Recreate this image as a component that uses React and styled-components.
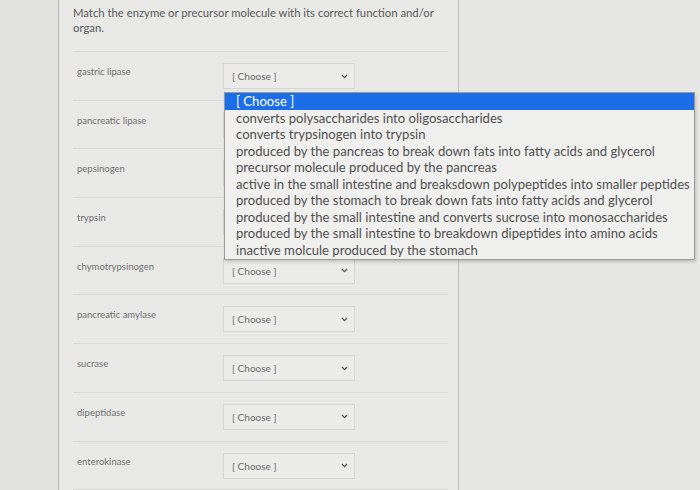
import styled, { createGlobalStyle } from 'styled-components'

const GlobalStyle = createGlobalStyle`
  html, body {
    margin: 0;
    padding: 0;
    background: #e5e5e3;
    font-family: Lato, "Open Sans", sans-serif;
  }
`

const enzymes = [
  'gastric lipase',
  'pancreatic lipase',
  'pepsinogen',
  'trypsin',
  'chymotrypsinogen',
  'pancreatic amylase',
  'sucrase',
  'dipeptidase',
  'enterokinase',
]

const options = [
  '[ Choose ]',
  'converts polysaccharides into oligosaccharides',
  'converts trypsinogen into trypsin',
  'produced by the pancreas to break down fats into fatty acids and glycerol',
  'precursor molecule produced by the pancreas',
  'active in the small intestine and breaksdown polypeptides into smaller peptides',
  'produced by the stomach to break down fats into fatty acids and glycerol',
  'produced by the small intestine and converts sucrose into monosaccharides',
  'produced by the small intestine to breakdown dipeptides into amino acids',
  'inactive molcule produced by the stomach',
]

const Page = styled.div`
  display: flex;
  width: 700px;
  height: 490px;
  overflow: hidden;
  background: #e4e4e2;
`

const Gutter = styled.div`
  width: 58px;
  border-right: 1px solid #b9b9b7;
  background: #e2e2e0;
`

const Panel = styled.div`
  width: 400px;
  border-right: 1px solid #bdbdbb;
  background: #e8e8e6;
  padding: 6px 10px 0 14px;
  box-sizing: border-box;
`

const Question = styled.p`
  margin: 0;
  font-size: 11.3px;
  line-height: 14.5px;
  color: #595959;
  padding-bottom: 16px;
  border-bottom: 1px solid #d9d9d7;
`

const Row = styled.div`
  position: relative;
  display: flex;
  align-items: flex-start;
  height: 36.7px;
  border-bottom: 1px solid #d8d8d6;
  padding-top: 11px;
  box-sizing: content-box;
`

const Label = styled.div`
  width: 146px;
  padding-left: 4px;
  padding-top: 3px;
  font-size: 9.5px;
  color: #707070;
`

const SelectBox = styled.div`
  position: relative;
  display: flex;
  align-items: center;
  justify-content: space-between;
  width: 132px;
  height: 26px;
  box-sizing: border-box;
  border: 1px solid #d4d4d2;
  background: #ebebe9;
  padding: 0 6px 0 8px;
  font-size: 10px;
  color: #6a6a6a;
`

const Chevron = () => (
  <svg width="7" height="5" viewBox="0 0 7 5">
    <path d="M1 1 L3.5 3.6 L6 1" fill="none" stroke="#555" strokeWidth="1.3" />
  </svg>
)

const Dropdown = styled.ul`
  position: absolute;
  top: 28px;
  left: 0;
  width: 469px;
  margin: 0;
  padding: 0 0 1px;
  list-style: none;
  background: #efefed;
  border: 1px solid #9a9a98;
  box-shadow: 1px 2px 3px rgba(0, 0, 0, 0.18);
  z-index: 2;
`

const Option = styled.li`
  height: 16.5px;
  line-height: 16.5px;
  padding-left: 11px;
  font-size: 13.1px;
  white-space: nowrap;
  color: ${p => (p.$active ? '#ffffff' : '#4f4f4f')};
  background: ${p => (p.$active ? '#1c6ee8' : 'transparent')};
`

const Rest = styled.div`
  flex: 1;
  background: #e6e6e4;
`

export default function App() {
  return (
    <>
      <GlobalStyle />
      <Page>
        <Gutter />
        <Panel>
          <Question>
            Match the enzyme or precursor molecule with its correct function and/or organ.
          </Question>
          {enzymes.map((name, i) => (
            <Row key={name}>
              <Label>{name}</Label>
              <SelectBox>
                [ Choose ]
                <Chevron />
                {i === 0 && (
                  <Dropdown>
                    {options.map((opt, j) => (
                      <Option key={opt} $active={j === 0}>
                        {opt}
                      </Option>
                    ))}
                  </Dropdown>
                )}
              </SelectBox>
            </Row>
          ))}
        </Panel>
        <Rest />
      </Page>
    </>
  )
}
